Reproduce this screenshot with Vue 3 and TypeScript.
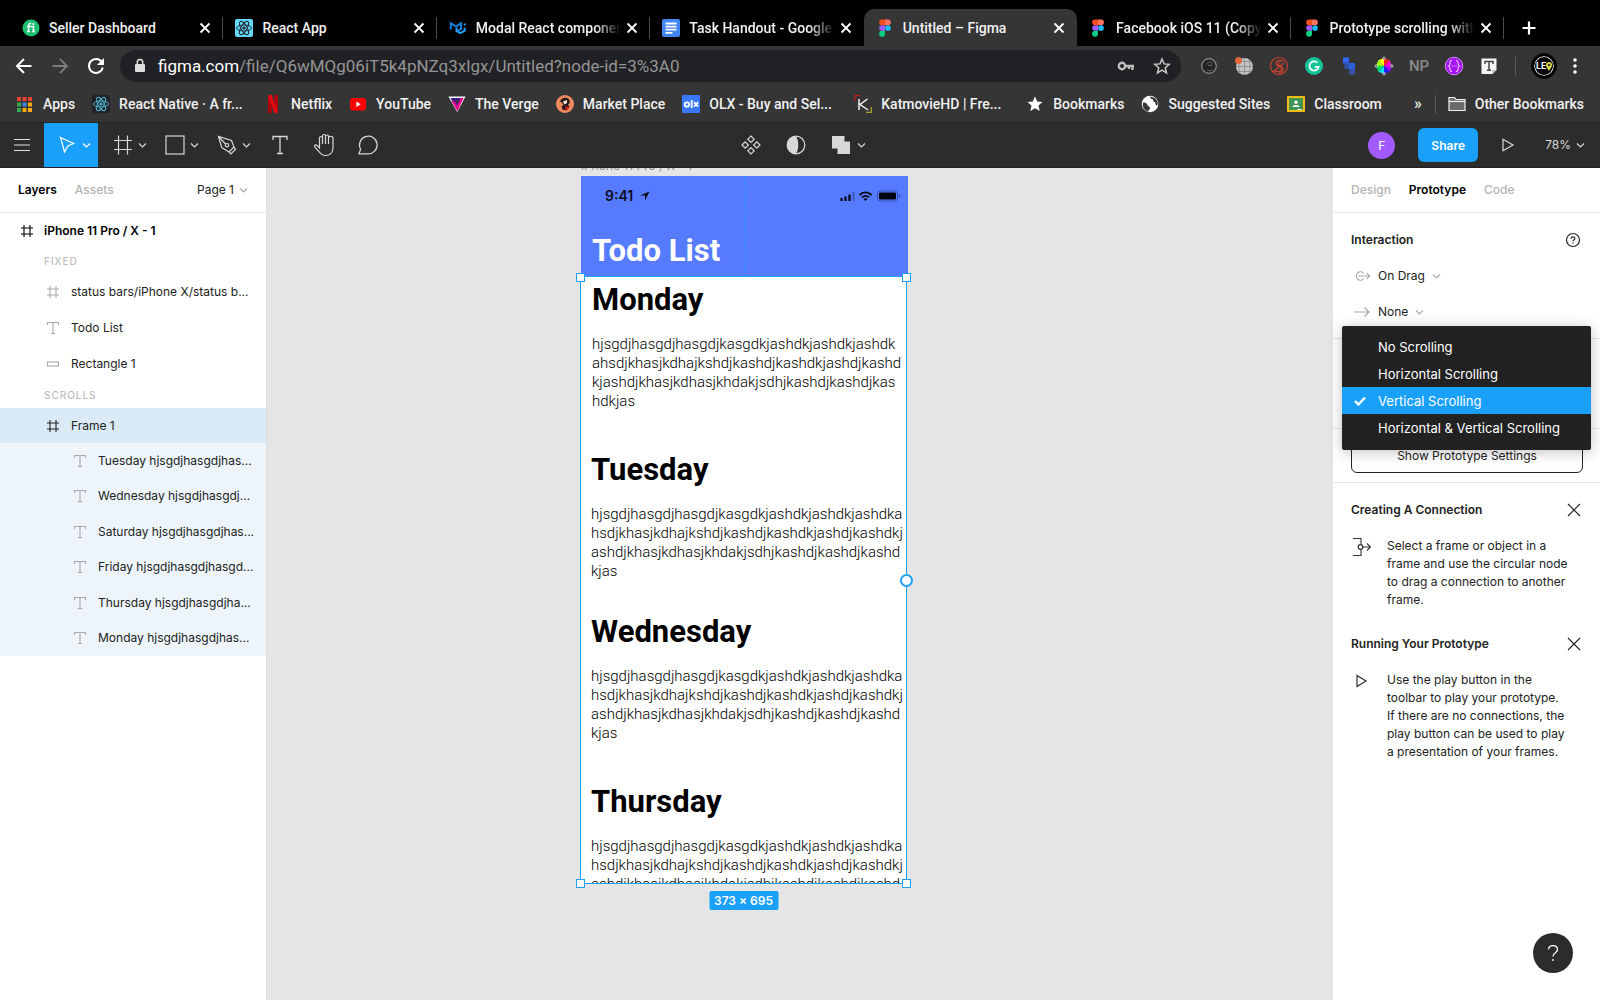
<script setup lang="ts">
import { ref } from 'vue'

interface Tab { title: string; icon: string; active?: boolean; fade?: boolean }
interface Mark { label: string; icon: string; clipped?: boolean }
interface DayBlock { title: string; x: number; y: number; text: string }

const svg = (size: number, body: string, box = size): string =>
  `<svg width="${size}" height="${size}" viewBox="0 0 ${box} ${box}" fill="none" style="display:block">${body}</svg>`

const orbit = (c: string, w: number): string =>
  `<g stroke="${c}" stroke-width="${w}"><ellipse cx="9" cy="9" rx="7.5" ry="3"/><ellipse cx="9" cy="9" rx="7.5" ry="3" transform="rotate(60 9 9)"/><ellipse cx="9" cy="9" rx="7.5" ry="3" transform="rotate(120 9 9)"/></g><circle cx="9" cy="9" r="1.6" fill="${c}"/>`

const figmaIcon = svg(18,
  '<path d="M6 0.5h3v5.7H6a2.85 2.85 0 0 1 0-5.7z" fill="#f24e1e"/><path d="M9 0.5h3a2.85 2.85 0 0 1 0 5.7H9z" fill="#ff7262"/><path d="M6 6.2h3v5.6H6a2.8 2.8 0 0 1 0-5.6z" fill="#a259ff"/><circle cx="12" cy="9" r="2.85" fill="#1abcfe"/><path d="M6 11.8h3v2.9a2.95 2.95 0 1 1-3-2.9z" fill="#0acf83"/>')

const tabs: Tab[] = [
  { title: 'Seller Dashboard', icon: svg(18, '<circle cx="9" cy="9" r="8.5" fill="#1dbf73"/><path d="M5 12.5h3M5 7.5h6.5v5M10 12.5h3M6.6 12.5V6.4c0-1.6 1-2.2 2.6-1.9" stroke="#fff" stroke-width="1.5"/><circle cx="11.4" cy="5" r="1" fill="#fff"/>') },
  { title: 'React App', icon: svg(18, `<rect width="18" height="18" rx="2" fill="#61dafb"/>${orbit('#20232a', 0.9)}`) },
  { title: 'Modal React component', fade: true, icon: svg(18, '<path d="M1.8 10.500V4.300L7 7.300l5-3v5.600L8.500 12" stroke="#1080e0" stroke-width="2"/><path d="M7.500 8.500v3.500l3.800 2.200 4.400-2.500V8.700M15.700 6.600V4.500" stroke="#29a0f5" stroke-width="2"/>') },
  { title: 'Task Handout - Google D', fade: true, icon: svg(18, '<rect width="18" height="18" rx="2" fill="#4285f4"/><path d="M3.500 4.500h11M3.500 7.600h11M3.500 10.700h11M3.500 13.800h7" stroke="#fff" stroke-width="1.800"/>') },
  { title: 'Untitled – Figma', icon: figmaIcon, active: true },
  { title: 'Facebook iOS 11 (Copy)', fade: true, icon: figmaIcon },
  { title: 'Prototype scrolling with', fade: true, icon: figmaIcon },
]

const marks: Mark[] = [
  { label: 'Apps', icon: svg(17, '<g><path d="M1 1h4v4H1zM6.500 1h4v4h-4zM12 1h4v4h-4z" fill="#ea4335"/><path d="M1 6.500h4v4H1zM1 12h4v4H1z" fill="#34a853"/><path d="M6.500 6.500h4v4h-4z" fill="#4285f4"/><path d="M12 6.500h4v4h-4zM6.500 12h4v4h-4zM12 12h4v4h-4z" fill="#fbab05"/></g>') },
  { label: 'React Native · A fr...', clipped: true, icon: svg(18, `<rect width="18" height="18" rx="2" fill="#20232a"/>${orbit('#53b4d1', 0.9)}`) },
  { label: 'Netflix', icon: svg(18, '<path d="M4 0h3.600v18H4zM10.400 0H14v18h-3.600z" fill="#b1060f"/><path d="M4 0h3.600L14 18h-3.600z" fill="#e50914"/>') },
  { label: 'YouTube', icon: svg(18, '<rect x="1" y="3" width="16" height="12.500" rx="3" fill="#f00"/><path d="M7.300 6.500v5.500l4.400-2.750z" fill="#fff"/>') },
  { label: 'The Verge', icon: svg(18, '<path d="M0.500 1.500h17L9.200 17z" fill="#fff"/><path d="M2.500 3h13L9 14.600z" fill="#3b1f8f"/><path d="M6.500 6.200L9 11l3.500-8h3L9.300 16.300 3.500 6z" fill="#ec008c"/><path d="M7 5h4L9 9z" fill="#353535"/>') },
  { label: 'Market Place', icon: svg(18, '<circle cx="9" cy="9" r="9" fill="#f08a5a"/><path d="M4 6.500c1-4 7-5 9-2 1.500 2 1 4-1 5l1.500 2.500-3 3.500-4-1-1-3 2-1.500-1-2z" fill="#241a1a"/><path d="M7 6.500l4-1.500v3l-2.500 1.500z" fill="#f7e7dc"/><path d="M9.500 11l3.500 1-2 3-2-1z" fill="#c81e1e"/>') },
  { label: 'OLX - Buy and Sel...', clipped: true, icon: svg(18, '<rect width="18" height="18" rx="1" fill="#3a77ff"/><circle cx="4.900" cy="9.500" r="2.200" stroke="#fff" stroke-width="1.800"/><path d="M9.700 5v8" stroke="#fff" stroke-width="1.800"/><path d="M12 7.200l4.200 4.400M16.200 7.200L12 11.600" stroke="#fff" stroke-width="1.700"/>') },
  { label: 'KatmovieHD | Fre...', clipped: true, icon: svg(18, '<path d="M0.700 6V0.700H6" stroke="#c01818" stroke-width="1.300"/><path d="M17.300 12v5.300H12" stroke="#a5a32a" stroke-width="1.300"/><path d="M5 4v11M13.500 4L6 9.500l8 5.500" stroke="#f2f2f2" stroke-width="1.500"/>') },
  { label: 'Bookmarks', icon: svg(18, '<path d="M9 1.500l2.200 5 5.300.5-4 3.600 1.200 5.400L9 13.200 4.300 16l1.200-5.400-4-3.600 5.300-.5z" fill="#fff"/>') },
  { label: 'Suggested Sites', icon: svg(18, '<circle cx="9" cy="9" r="8.300" fill="#fff"/><path d="M2 7.500c2 0 4 .5 4.500 2.500s2.500 1 2.500 3-1.500 1-1.500 3.500C4 16 1 12.500 2 7.500zM8 1.500c2 0 1 2.500 3 2.500s.5 2.500 2.500 3 0 2.500 2 3.500l1.300-1c.5-4-3-8-8.800-8z" fill="#353535"/>') },
  { label: 'Classroom', icon: svg(18, '<rect y="1" width="18" height="16" rx="1" fill="#f5ba14"/><rect x="2" y="3" width="14" height="12" fill="#3f9455"/><circle cx="9" cy="7.200" r="1.700" fill="#fff"/><path d="M5.300 12c.2-2.700 7.200-2.700 7.400 0z" fill="#fff"/><path d="M10.500 14h4v1h-4z" fill="#fff"/>') },
]

const extensions: string[] = [
  svg(20, '<circle cx="10" cy="10" r="7.300" stroke="#8d8d8d" stroke-width="1.200" fill="#232323"/><path d="M7.500 8.500c1-2.500 5-3 6.500-1M9 9.500l4.500-.5M8.500 14c2 1.500 4.500.5 5.500-1.500" stroke="#6b6b6b" stroke-width="1"/>'),
  svg(20, '<circle cx="10.500" cy="10.500" r="8.500" fill="#c4c4c4"/><path d="M10.500 2v17M2 10.500h17M4 5.500h13M4 15.500h13M6 3.500c-1.500 4-1.500 10 0 14M15 3.500c1.500 4 1.500 10 0 14" stroke="#858585" stroke-width=".8"/><circle cx="4.500" cy="4.500" r="3.500" fill="#e0673b"/>'),
  svg(20, '<circle cx="10" cy="10" r="8.500" stroke="#c5402e" stroke-width="1.200"/><path d="M14.500 5.500C11 3 6 5 7 8c.8 2.400 5 2.200 5.500 4.500.5 2.800-4 4.200-7 2M4 16L15 7M11.500 6.500C9 6 8 8 9.500 9s5 1.500 5 4-3 4-5 4" stroke="#c5402e" stroke-width="1.200"/>'),
  svg(20, '<circle cx="10" cy="10" r="9" fill="#15c39a"/><path d="M13.300 6.700A4.600 4.600 0 1 0 14.600 10.800H10.800" stroke="#fff" stroke-width="1.800"/>'),
  svg(20, '<path d="M4 1.500h6v5h-6z" fill="#2f67f6"/><path d="M4 6.500h6v1.500H4z" fill="#2a59d6"/><path d="M10 7h6v6h-6z" fill="#2f5fe0"/><path d="M10 13h6v5.500h-6z" fill="#3552a8"/><path d="M5.500 8H10v5H5.500z" fill="#2c4fa8"/>'),
  svg(20, '<path d="M10 10L10 2l5.700 2.300z" fill="#f22"/><path d="M10 10L15.700 4.300 18 10z" fill="#f0c"/><path d="M10 10h8l-2.300 5.700z" fill="#a0f"/><path d="M10 10l5.700 5.700L10 18z" fill="#22f"/><path d="M10 10v8l-5.700-2.300z" fill="#0df"/><path d="M10 10l-5.700 5.700L2 10z" fill="#0d6"/><path d="M10 10H2l2.300-5.700z" fill="#9f0"/><path d="M10 10L4.300 4.300 10 2z" fill="#ff0"/><g stroke="#ddd" stroke-width=".9" fill="#353535"><circle cx="10" cy="2.300" r="1.200"/><circle cx="10" cy="17.700" r="1.200"/><circle cx="2.300" cy="10" r="1.200"/><circle cx="17.700" cy="10" r="1.200"/></g>'),
  '<b class="np">NP</b>',
  svg(20, '<circle cx="10" cy="10" r="8.800" fill="#a514f0" stroke="#c98be8" stroke-width="1"/><path d="M8 4.500c-2 0-2 1-2 2.500S6 9.500 4.500 10C6 10.500 6 11.500 6 13s0 2.500 2 2.500M12 4.500c2 0 2 1 2 2.500s0 2.500 1.500 3c-1.500.5-1.500 1.500-1.500 3s0 2.500-2 2.500M7.500 10h1.300M9.500 10h1.200M11.500 10h1.200" stroke="#e4b8ff" stroke-width="1.200"/>'),
  svg(20, '<path d="M2.500 2.500h15V14l-4 4h-11z" fill="#f4f4f4"/><path d="M17.500 14h-4v4z" fill="#b5b5b5"/><path d="M6 8V5.500h8V8M10 5.500v8.500M8 14.200h4" stroke="#444" stroke-width="1.500"/>'),
]

const chevron = svg(9, '<path d="M1 2.500l3.500 3.500L8 2.500" stroke="currentColor" stroke-width="1.200"/>')
const hashGlyph = svg(14, '<path d="M4 1v12M10 1v12M1 4h12M1 10h12" stroke="currentColor" stroke-width="1.100"/>')
const textGlyph = svg(14, '<path d="M1.500 4V1.500h11V4M7 1.500v11M5 12.500h4" stroke="currentColor" stroke-width="1.100"/>')
const rectGlyph = svg(14, '<rect x="1.500" y="5" width="11" height="4" stroke="currentColor" stroke-width="1.100"/>')
const crossGlyph = svg(14, '<path d="M1 1l12 12M13 1L1 13" stroke="currentColor" stroke-width="1.100"/>')

const fixedLayers = [
  { name: 'status bars/iPhone X/status b...', icon: hashGlyph },
  { name: 'Todo List', icon: textGlyph },
  { name: 'Rectangle 1', icon: rectGlyph },
]
const textLayers = [
  'Tuesday hjsgdjhasgdjhas...',
  'Wednesday hjsgdjhasgdj...',
  'Saturday hjsgdjhasgdjhas...',
  'Friday hjsgdjhasgdjhasgd...',
  'Thursday hjsgdjhasgdjha...',
  'Monday hjsgdjhasgdjhas...',
]

const mondayText = 'hjsgdjhasgdjhasgdjkasgdkjashdkjashdkjashdk\nahsdjkhasjkdhajkshdjkashdjkashdkjashdjkashd\nkjashdjkhasjkdhasjkhdakjsdhjkashdjkashdjkas\nhdkjas'
const dayText = 'hjsgdjhasgdjhasgdjkasgdkjashdkjashdkjashdka\nhsdjkhasjkdhajkshdjkashdjkashdkjashdjkashdkj\nashdjkhasjkdhasjkhdakjsdhjkashdjkashdjkashd\nkjas'
const days: DayBlock[] = [
  { title: 'Monday', x: 11, y: 5, text: mondayText },
  { title: 'Tuesday', x: 10, y: 175, text: dayText },
  { title: 'Wednesday', x: 10, y: 337, text: dayText },
  { title: 'Thursday', x: 10, y: 507, text: dayText },
]

const scrollOptions = ['No Scrolling', 'Horizontal Scrolling', 'Vertical Scrolling', 'Horizontal & Vertical Scrolling']
const scrolling = ref('Vertical Scrolling')

const tips = [
  {
    title: 'Creating A Connection',
    lines: 'Select a frame or object in a\nframe and use the circular node\nto drag a connection to another\nframe.',
    icon: svg(20, '<path d="M2 1.500h8v6M10 12.500v6H2M11.500 10h8M16 6.500l3.500 3.500-3.500 3.500" stroke="#333" stroke-width="1.100"/><circle cx="9.500" cy="10" r="2.300" stroke="#333" stroke-width="1.200"/>'),
  },
  {
    title: 'Running Your Prototype',
    lines: 'Use the play button in the\ntoolbar to play your prototype.\nIf there are no connections, the\nplay button can be used to play\na presentation of your frames.',
    icon: svg(20, '<path d="M6 4.500v11l9-5.500z" stroke="#222" stroke-width="1.100"/>'),
  },
]
</script>

<template>
  <div class="window">
    <header class="browser">
      <div class="tabstrip">
        <div v-for="(tab, i) in tabs" :key="i" class="tab" :class="{ active: tab.active, before: i === 3 }">
          <span class="favicon" v-html="tab.icon"></span>
          <span class="tab-title" :class="{ fade: tab.fade }">{{ tab.title }}</span>
          <button class="plain" aria-label="Close tab">
            <svg width="12" height="12" viewBox="0 0 12 12"><path d="M1.500 1.500l9 9M10.500 1.500l-9 9" stroke="#fff" stroke-width="1.800" /></svg>
          </button>
        </div>
        <button class="plain new-tab" aria-label="New tab">
          <svg width="16" height="16" viewBox="0 0 16 16"><path d="M8 1.500v13M1.500 8h13" stroke="#fff" stroke-width="2.200" /></svg>
        </button>
      </div>

      <div class="address-row">
        <button class="plain" aria-label="Back"><svg width="20" height="20" viewBox="0 0 20 20" fill="none"><path d="M17.500 10H4M10 3l-7 7 7 7" stroke="#fff" stroke-width="2" /></svg></button>
        <button class="plain" aria-label="Forward"><svg width="20" height="20" viewBox="0 0 20 20" fill="none"><path d="M2.500 10H16M10 3l7 7-7 7" stroke="#7d7d7d" stroke-width="1.800" /></svg></button>
        <button class="plain" aria-label="Reload"><svg width="20" height="20" viewBox="0 0 20 20" fill="none"><path d="M15.800 6A7 7 0 1 0 16.800 11.500" stroke="#fff" stroke-width="2" /><path d="M18 2v7h-7z" fill="#fff" /></svg></button>
        <div class="omnibox">
          <svg width="12" height="16" viewBox="0 0 12 16" fill="none"><rect x="1" y="6" width="10" height="8" rx="1" fill="#dcdcdc" /><path d="M3.300 7V4.300a2.700 2.700 0 0 1 5.400 0V7" stroke="#dcdcdc" stroke-width="1.500" /></svg>
          <span class="url"><b>figma.com</b>/file/Q6wMQg06iT5k4pNZq3xlgx/Untitled?node-id=3%3A0</span>
          <svg width="18" height="18" viewBox="0 0 18 18" fill="none"><circle cx="5" cy="9" r="3.200" stroke="#bdbdbd" stroke-width="2.400" /><path d="M8 9h9M15.500 9v4M12 9v3" stroke="#bdbdbd" stroke-width="2.400" /></svg>
          <svg width="18" height="18" viewBox="0 0 18 18" fill="none"><path d="M9 2l2 4.900 5.300.4-4 3.500 1.200 5.100L9 13.100l-4.500 2.800 1.200-5.100-4-3.500L7 6.900z" stroke="#c8c8c8" stroke-width="1.500" /></svg>
        </div>
        <div class="extensions">
          <span v-for="(icon, i) in extensions" :key="i" class="ext" v-html="icon"></span>
        </div>
        <i class="rule"></i>
        <span class="profile"><span>LE</span><svg width="6" height="9" viewBox="0 0 6 9"><path d="M3 9C1.500 6.500 0 5 0 3a3 3 0 0 1 6 0c0 2-1.500 3.500-3 6z" fill="#d8d84a" /><circle cx="3" cy="3" r="1.200" fill="#333" /></svg></span>
        <button class="plain" aria-label="Browser menu"><svg width="6" height="18" viewBox="0 0 6 18" fill="#fff"><circle cx="3" cy="3" r="1.800" /><circle cx="3" cy="9" r="1.800" /><circle cx="3" cy="15" r="1.800" /></svg></button>
      </div>

      <nav class="bookmarks">
        <a v-for="mark in marks" :key="mark.label" href="#"><span class="favicon" v-html="mark.icon"></span><span :class="{ clipped: mark.clipped }">{{ mark.label }}</span></a>
        <span class="more">»</span>
        <i class="rule"></i>
        <a href="#">
          <svg width="18" height="18" viewBox="0 0 18 18"><path d="M1 15.500V2.500h5.500L8 4.500h9v11z" fill="#6b6b6b" stroke="#f0f0f0" stroke-width="1.200" /><path d="M1 6.500h16" stroke="#f0f0f0" stroke-width="1.200" /></svg>
          Other Bookmarks
        </a>
      </nav>
    </header>

    <div class="toolbar">
      <div class="tools">
        <button class="tool menu" aria-label="Menu"><svg width="16" height="16" viewBox="0 0 16 16"><path d="M0 2.500h16M0 8h16M0 13.500h16" stroke="#e0e0e0" stroke-width="1.200" /></svg></button>
        <button class="tool move" aria-label="Move">
          <svg width="20" height="20" viewBox="0 0 20 20" fill="none"><path d="M3.500 2.500l13 6-5.600 2.400-3.400 6z" stroke="#fff" stroke-width="1.300" /></svg><span v-html="chevron"></span>
        </button>
        <button class="tool wide" aria-label="Frame">
          <svg width="20" height="20" viewBox="0 0 20 20"><path d="M5.500 0.500v19M14.500 0.500v19M1 5.500h18M1 14.500h18" stroke="#d8d8d8" stroke-width="1.200" /></svg><span v-html="chevron"></span>
        </button>
        <button class="tool wide" aria-label="Rectangle">
          <svg width="20" height="20" viewBox="0 0 20 20" fill="none"><rect x="1" y="1" width="18" height="18" stroke="#d8d8d8" stroke-width="1.200" /></svg><span v-html="chevron"></span>
        </button>
        <button class="tool wide" aria-label="Pen">
          <svg width="20" height="20" viewBox="0 0 20 20" fill="none"><path d="M1.500 1.500l3.200 11 7.300 4.500 5-5-2.500-6.500zM1.500 1.500l7.500 8M12 17l2 2 4.500-4.500L17 12" stroke="#d8d8d8" stroke-width="1.200" /><circle cx="10" cy="10.200" r="1.700" stroke="#d8d8d8" stroke-width="1.200" /></svg><span v-html="chevron"></span>
        </button>
        <button class="tool single" aria-label="Text"><svg width="20" height="20" viewBox="0 0 20 20" fill="none"><path d="M3 5V1.500h14V5M10 1.500v17M7 18.500h6" stroke="#d8d8d8" stroke-width="1.300" /></svg></button>
        <button class="tool single" aria-label="Hand"><svg width="22" height="24" viewBox="0 0 22 24" fill="none"><path d="M6.500 13V5a1.500 1.500 0 0 1 3 0v6M9.500 5V3a1.500 1.500 0 0 1 3 0v8M12.500 3.500a1.500 1.500 0 0 1 3 0V11M15.500 5.500a1.500 1.500 0 0 1 4.500 0v9c0 5-3 8-7.500 8-3.500 0-5-1.500-7-4.500L1.700 13.800c-.7-1.500 1-2.600 2.200-1.600L6.500 15v-2" stroke="#d8d8d8" stroke-width="1.200" /></svg></button>
        <button class="tool single" aria-label="Comment"><svg width="22" height="22" viewBox="0 0 22 22" fill="none"><path d="M2 19.800l1.600-4.600A8.800 8.800 0 1 1 11 19.800z" stroke="#d8d8d8" stroke-width="1.200" /></svg></button>
      </div>
      <div class="center-tools">
        <svg width="20" height="20" viewBox="0 0 20 20" fill="none" stroke="#d8d8d8" stroke-width="1.200"><path d="M10 1l3.200 3.200L10 7.400 6.800 4.200zM10 12.600l3.200 3.200L10 19l-3.200-3.200zM4.200 6.800L7.400 10l-3.200 3.200L1 10zM15.800 6.800L19 10l-3.200 3.200-3.200-3.200z" /></svg>
        <svg width="20" height="20" viewBox="0 0 20 20" fill="none"><circle cx="10" cy="10" r="8.800" stroke="#d8d8d8" stroke-width="1.200" /><path d="M10 1.200a8.800 8.800 0 0 0 0 17.600c3-4 3-13.600 0-17.600z" fill="#d8d8d8" /></svg>
        <span class="boolean"><svg width="20" height="20" viewBox="0 0 20 20"><path d="M1 1h12.500v5.500H19V19H6.500v-5.500H1z" fill="#d8d8d8" /></svg><span v-html="chevron"></span></span>
      </div>
      <div class="actions">
        <span class="avatar">F</span>
        <button class="share">Share</button>
        <button class="plain" aria-label="Present"><svg width="14" height="14" viewBox="0 0 14 14" fill="none"><path d="M2 1.200v11.600L12 7z" stroke="#d8d8d8" stroke-width="1.200" /></svg></button>
        <button class="plain zoom">78%<span v-html="chevron"></span></button>
      </div>
    </div>

    <div class="workspace">
      <aside class="panel">
        <div class="panel-head">
          <button class="plain on">Layers</button>
          <button class="plain off">Assets</button>
          <button class="plain page">Page 1<span v-html="chevron"></span></button>
        </div>
        <div class="layer top"><span v-html="hashGlyph"></span>iPhone 11 Pro / X - 1</div>
        <div class="group-label">FIXED</div>
        <div v-for="layer in fixedLayers" :key="layer.name" class="layer nested"><span class="dim" v-html="layer.icon"></span>{{ layer.name }}</div>
        <div class="group-label">SCROLLS</div>
        <div class="layer nested selected"><span v-html="hashGlyph"></span>Frame 1</div>
        <div class="children">
          <div v-for="name in textLayers" :key="name" class="layer deep"><span class="dim" v-html="textGlyph"></span>{{ name }}</div>
        </div>
      </aside>

      <main class="canvas">
        <div class="board-name">iPhone 11 Pro / X - 1</div>
        <div class="board-head">
          <div class="status">
            <span class="clock">9:41</span>
            <svg width="10" height="10" viewBox="0 0 10 10"><path d="M9.500.5L0 4.600h5v5z" fill="#0b0b20" /></svg>
            <svg class="signals" width="62" height="12" viewBox="0 0 62 12" fill="none">
              <path d="M1.500 8v3M5.500 6.500V11M9.500 4.500V11" stroke="#050510" stroke-width="2.200" /><path d="M13.500 2v9" stroke="#3f5cc4" stroke-width="2" />
              <path d="M19.500 5c3.500-3.500 8.500-3.500 12 0M22 7.300c2.200-1.800 4.800-1.800 7 0" stroke="#050510" stroke-width="1.800" /><path d="M23.600 9l1.900 2 1.900-2c-1.100-1-2.700-1-3.800 0z" fill="#050510" />
              <rect x="37.500" y="1" width="20" height="10" rx="2.500" stroke="#3a55b8" /><rect x="39" y="2.500" width="17" height="7" rx="1" fill="#050510" /><path d="M59.500 4.500v3" stroke="#3a55b8" stroke-width="1.500" />
            </svg>
          </div>
          <h1>Todo List</h1>
          <i class="guide"></i>
        </div>
        <div class="scroll-frame">
          <div class="clip">
            <section v-for="day in days" :key="day.title" class="day" :style="{ left: day.x + 'px', top: day.y + 'px' }">
              <h2>{{ day.title }}</h2>
              <p>{{ day.text }}</p>
            </section>
          </div>
          <i class="handle nw"></i><i class="handle ne"></i><i class="handle sw"></i><i class="handle se"></i>
          <i class="node"></i>
          <span class="size">373 × 695</span>
        </div>
      </main>

      <aside class="panel right">
        <div class="panel-head">
          <button class="plain off">Design</button>
          <button class="plain on">Prototype</button>
          <button class="plain off">Code</button>
        </div>
        <section class="interaction">
          <div class="row heading">Interaction
            <svg width="16" height="16" viewBox="0 0 16 16" fill="none"><circle cx="8" cy="8" r="6.500" stroke="#222" stroke-width="1.200" /><path d="M6.200 6.700c0-2.500 3.700-2.300 3.700-.2 0 1.200-1.900 1.300-1.900 2.700M8 10.200v1.300" stroke="#222" stroke-width="1.200" /></svg>
          </div>
          <button class="row plain choice">
            <svg width="18" height="18" viewBox="0 0 18 18" fill="none" stroke="#a8a8a8" stroke-width="1.100"><path d="M10.800 6.500a4.200 4.200 0 1 0 0 5M5 9h11.500M13.500 5.800L16.700 9l-3.200 3.200" /></svg>
            On Drag<span class="dim" v-html="chevron"></span>
          </button>
          <button class="row plain choice">
            <svg width="18" height="18" viewBox="0 0 18 18" fill="none" stroke="#a8a8a8" stroke-width="1.100"><path d="M1 9h15M11.500 4.500L16 9l-4.500 4.500" /></svg>
            None<span class="dim" v-html="chevron"></span>
          </button>
          <ul class="menu-list" role="listbox" aria-label="Overflow behavior">
            <li v-for="option in scrollOptions" :key="option" role="option" :class="{ chosen: option === scrolling }" @click="scrolling = option">
              <span class="tick"><svg v-if="option === scrolling" width="12" height="10" viewBox="0 0 12 10" fill="none"><path d="M1 5l3.500 3.500L11 1.500" stroke="#fff" stroke-width="2.400" /></svg></span>{{ option }}
            </li>
          </ul>
        </section>
        <section class="overflow"></section>
        <section class="settings"><button>Show Prototype Settings</button></section>
        <section v-for="tip in tips" :key="tip.title" class="tip">
          <div class="row heading">{{ tip.title }}<button class="plain" aria-label="Dismiss" v-html="crossGlyph"></button></div>
          <div class="tip-body"><span v-html="tip.icon"></span><p>{{ tip.lines }}</p></div>
        </section>
        <button class="help" aria-label="Help"><svg width="14" height="18" viewBox="0 0 14 18" fill="none"><path d="M2.500 5.500c0-5.500 9-5 9 0C11.500 9 7 8.500 7 12.500M7 15v2" stroke="#fff" stroke-width="1.300" /></svg></button>
      </aside>
    </div>
  </div>
</template>

<style>
body { margin: 0; background: #e5e5e5; }
.np { color: #8b8b8b; font: 500 15px Roboto, sans-serif; }
</style>

<style scoped>
* { box-sizing: border-box; }
.window { display: flex; flex-direction: column; min-height: 100vh; font: 12px/18px Inter, sans-serif; color: #222; }
.plain { display: flex; align-items: center; padding: 0; border: 0; background: none; color: inherit; font: inherit; }
svg { display: block; flex: none; }
h1, h2, p, ul { margin: 0; padding: 0; }

.browser { background: #353535; color: #f1f1f1; font-family: Roboto, sans-serif; }
.tabstrip { display: flex; height: 46px; padding: 9px 0 0 10px; background: #000; }
.tab { position: relative; display: flex; flex: 1; align-items: center; min-width: 0; height: 37px; padding: 0 12px; font-size: 14px; font-weight: 500; }
.tab::after { content: ''; position: absolute; right: 0; width: 1px; height: 22px; background: #4a4a4a; }
.tab.active { border-radius: 10px 10px 0 0; background: #353535; }
.tab.active::after, .tab.before::after { display: none; }
.favicon { flex: none; width: 18px; }
.tab-title { flex: 1; margin: 0 5px 0 9px; overflow: hidden; white-space: nowrap; }
.fade { mask-image: linear-gradient(to right, #000 82%, transparent); }
.new-tab { width: 96px; padding-left: 17px; }
.address-row { display: flex; align-items: center; gap: 16px; height: 40px; padding: 0 22px 0 14px; }
.omnibox { display: flex; flex: 1; align-items: center; gap: 18px; height: 32px; margin: 0 2px 0 -2px; padding: 0 10px 0 14px; border-radius: 16px; background: #202124; }
.url { flex: 1; margin-left: -6px; overflow: hidden; color: #959595; font-size: 17px; white-space: nowrap; }
.url b { color: #fff; font-weight: 400; }
.extensions { display: flex; gap: 15px; }
.ext { display: flex; align-items: center; justify-content: center; width: 20px; height: 20px; }
.rule { width: 1px; height: 19px; background: #5a5a5a; }
.profile { display: flex; align-items: center; justify-content: center; width: 24px; height: 24px; border: 2px solid #000; border-radius: 50%; outline: 1px solid #000; background: #000; box-shadow: inset 0 0 0 1px #ddd; color: #fff; font-size: 9px; font-weight: 700; }
.bookmarks { display: flex; align-items: center; gap: 17px; height: 36px; padding: 0 16px; font-size: 14px; font-weight: 500; white-space: nowrap; }
.bookmarks a { display: flex; align-items: center; gap: 9px; color: #f1f1f1; text-decoration: none; }
.clipped { min-width: 128px; }
.more { margin: 0 -4px 0 auto; font-size: 16px; }
.bookmarks .rule { margin-right: -5px; }

.toolbar { display: flex; height: 46px; border-top: 1px solid #242424; border-bottom: 1px solid #222; background: #2c2c2c; color: #d8d8d8; }
.tools, .center-tools, .actions { display: flex; flex: 1; align-items: center; }
.tool { display: flex; align-items: center; gap: 5px; height: 44px; padding: 0 9px; border: 0; background: none; color: #d8d8d8; }
.menu { width: 44px; padding: 0 14px; }
.move { width: 54px; margin-right: 6px; padding: 0 6px 0 13px; background: #18a0fb; color: #fff; }
.wide { width: 52px; }
.single { width: 44px; justify-content: center; }
.wide + .single { margin-left: -2px; }
.center-tools { justify-content: center; gap: 25px; padding-left: 22px; }
.boolean { display: flex; align-items: center; gap: 6px; }
.actions { justify-content: flex-end; padding-right: 15px; }
.avatar { width: 27px; height: 27px; border-radius: 50%; background: #a259ff; color: #fff; line-height: 27px; text-align: center; }
.share { width: 60px; height: 34px; margin: 0 23px; padding: 0; border: 0; border-radius: 6px; background: #18a0fb; color: #fff; font: 600 12px Inter, sans-serif; }
.zoom { gap: 5px; margin-left: 30px; }

.workspace { display: flex; flex: 1; }
.panel { width: 267px; flex: none; border-right: 1px solid #ddd; background: #fff; }
.right { position: relative; border: 0; }
.panel-head { display: flex; align-items: center; gap: 18px; height: 45px; padding: 0 18px; border-bottom: 1px solid #e5e5e5; }
.on { font-weight: 600; color: #000; }
.off { font-weight: 500; color: #b3b3b3; }
.page { gap: 5px; margin-left: auto; }
.page span, .dim { color: #a8a8a8; }
.layer { display: flex; align-items: center; gap: 10px; height: 36px; white-space: nowrap; }
.top { height: 35px; padding-left: 20px; color: #000; font-weight: 600; }
.nested { padding-left: 46px; gap: 11px; }
.selected { height: 35px; background: #daebf7; }
.children { display: grid; grid-auto-rows: 1fr; height: 213px; background: #edf5fb; }
.deep { height: auto; padding-left: 73px; gap: 11px; }
.group-label { height: 26px; padding-left: 44px; color: #b3b3b3; font-size: 10px; line-height: 26px; letter-spacing: 1px; }

.canvas { position: relative; flex: 1; overflow: hidden; background: #e5e5e5; }
.board-name { position: absolute; top: -11px; left: 314px; color: #8c8c8c; }
.board-head { position: absolute; top: 8px; left: 314px; width: 327px; height: 101px; background: #567bff; }
.status { display: flex; align-items: center; gap: 7px; height: 40px; padding: 0 6px 0 24px; }
.clock { color: #0b0b20; font-size: 14px; font-weight: 600; }
.signals { margin-left: auto; }
h1, h2 { font: 700 31px/36px Roboto, sans-serif; }
h1 { margin: 17px 0 0 11px; color: #fff; }
.guide { position: absolute; top: 0; bottom: 0; left: 50%; border-left: 1px dashed #18a0fb; }
.scroll-frame { position: absolute; top: 108px; left: 313px; width: 327px; height: 608px; border: 1px solid #18a0fb; background: #fff; }
.clip { position: absolute; inset: 0; overflow: hidden; }
.day { position: absolute; color: #000; }
.day p { margin-top: 17px; font: 300 15px/19px Roboto, sans-serif; white-space: pre; }
.handle { position: absolute; width: 9px; height: 9px; border: 1px solid #18a0fb; background: #fff; }
.nw, .ne { top: -4px; }
.sw, .se { bottom: -5px; }
.nw, .sw { left: -5px; }
.ne, .se { right: -5px; }
.node { position: absolute; top: 50%; right: -7px; width: 13px; height: 13px; margin-top: -6px; border: 2px solid #18a0fb; border-radius: 50%; background: #fff; }
.size { position: absolute; top: 614px; left: 50%; padding: 0 5px; border-radius: 2px; background: #18a0fb; color: #fff; font-weight: 600; line-height: 19px; white-space: nowrap; transform: translateX(-50%); }

.row { display: flex; align-items: center; height: 36px; }
.heading { justify-content: space-between; color: #222; font-weight: 600; }
.interaction { position: relative; height: 126px; padding: 9px 19px 0 18px; border-bottom: 1px solid #e5e5e5; }
.choice { gap: 7px; padding-left: 2px; }
.overflow { height: 90px; border-bottom: 1px solid #e5e5e5; }
.settings { height: 54px; padding: 8px 17px 10px 18px; border-bottom: 1px solid #e5e5e5; }
.settings button { width: 100%; height: 36px; border: 1px solid #222; border-radius: 6px; background: #fff; color: #222; font: 12px Inter, sans-serif; }
.menu-list { position: absolute; z-index: 2; top: 113px; right: 9px; left: 9px; padding: 7px 0 9px; border-radius: 2px; background: #222; box-shadow: 0 2px 14px rgba(0, 0, 0, 0.25); color: #fff; font-size: 13px; list-style: none; }
.menu-list li { display: flex; align-items: center; height: 27px; white-space: nowrap; }
.tick { width: 36px; padding-left: 12px; }
.chosen { background: #18a0fb; }
.tip { padding: 9px 19px 17px 18px; }
.tip + .tip { padding-top: 0; }
.tip-body { display: flex; gap: 16px; padding-top: 9px; }
.tip p { white-space: pre; }
.help { position: fixed; right: 27px; bottom: 27px; display: flex; align-items: center; justify-content: center; width: 40px; height: 40px; padding: 0; border: 0; border-radius: 50%; background: #2c2c2c; }
</style>
